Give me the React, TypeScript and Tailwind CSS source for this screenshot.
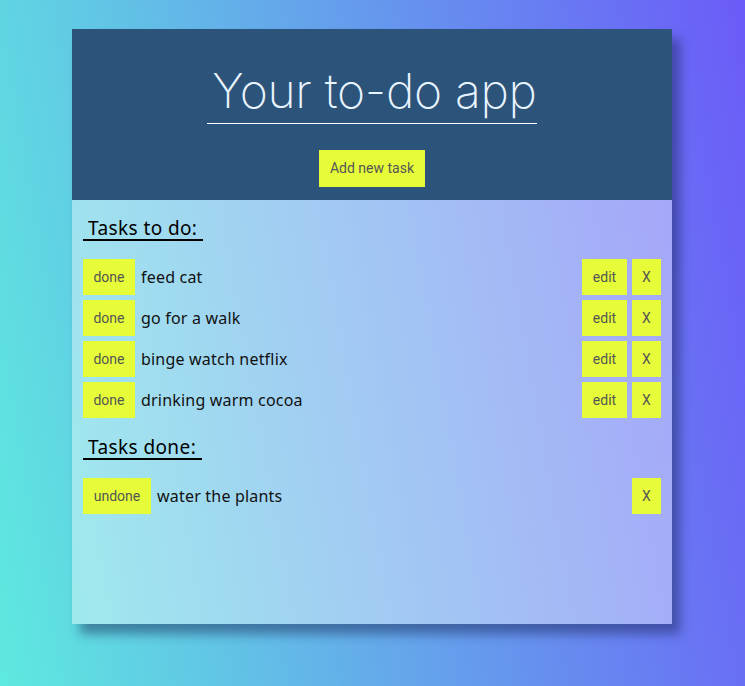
import React from "react";

const todo = ["feed cat", "go for a walk", "binge watch netflix", "drinking warm cocoa"];
const done = ["water the plants"];

const btn =
    "h-9 bg-[#e6fc38] text-[#555] text-[14px] flex items-center justify-center [font-family:Roboto,'Noto_Sans',sans-serif]";

const App: React.FC = () => {
    return (
        <div className="min-h-screen w-full bg-[linear-gradient(80deg,#5ee9df,#6b5bf8)] pt-[29px] pb-[62px] [font-family:'Noto_Sans',Inter,sans-serif]">
            <div className="ml-[72px] w-[600px] h-[595px] flex flex-col shadow-[8px_10px_10px_rgba(20,30,80,0.45)]">
                <div className="h-[171px] bg-[#2c5379] flex flex-col items-center pt-[34px]">
                    <h1 className="text-[#e8f4ff] text-[48px] leading-[56px] font-extralight pl-[5px] pb-[4px] border-b border-white [font-family:Inter,sans-serif] tracking-[-0.3px]">
                        Your to-do app
                    </h1>
                    <button className={btn + " mt-[26px] w-[106px] h-[37px]"}>Add new task</button>
                </div>
                <div className="flex-1 bg-white/40 px-[11px] pt-[17px]">
                    <h2 className="inline-block text-[19px] leading-[22px] pl-[5px] pr-[6px] border-b-2 border-black text-black tracking-[0.4px]">
                        Tasks to do:
                    </h2>
                    <div className="mt-[18px] flex flex-col gap-[5px]">
                        {todo.map((t) => (
                            <div key={t} className="flex items-center">
                                <button className={btn + " w-[52px]"}>done</button>
                                <span className="ml-[6px] text-[16px] text-[#111] tracking-[0.2px]">{t}</span>
                                <button className={btn + " w-[45px] ml-auto"}>edit</button>
                                <button className={btn + " w-[29px] ml-[5px]"}>X</button>
                            </div>
                        ))}
                    </div>
                    <h2 className="inline-block mt-[18px] text-[19px] leading-[22px] pl-[5px] pr-[6px] border-b-2 border-black text-black tracking-[0.4px]">
                        Tasks done:
                    </h2>
                    <div className="mt-[18px] flex flex-col gap-[5px]">
                        {done.map((t) => (
                            <div key={t} className="flex items-center">
                                <button className={btn + " w-[68px]"}>undone</button>
                                <span className="ml-[6px] text-[16px] text-[#111] tracking-[0.2px]">{t}</span>
                                <button className={btn + " w-[29px] ml-auto"}>X</button>
                            </div>
                        ))}
                    </div>
                </div>
            </div>
        </div>
    );
};

export default App;
